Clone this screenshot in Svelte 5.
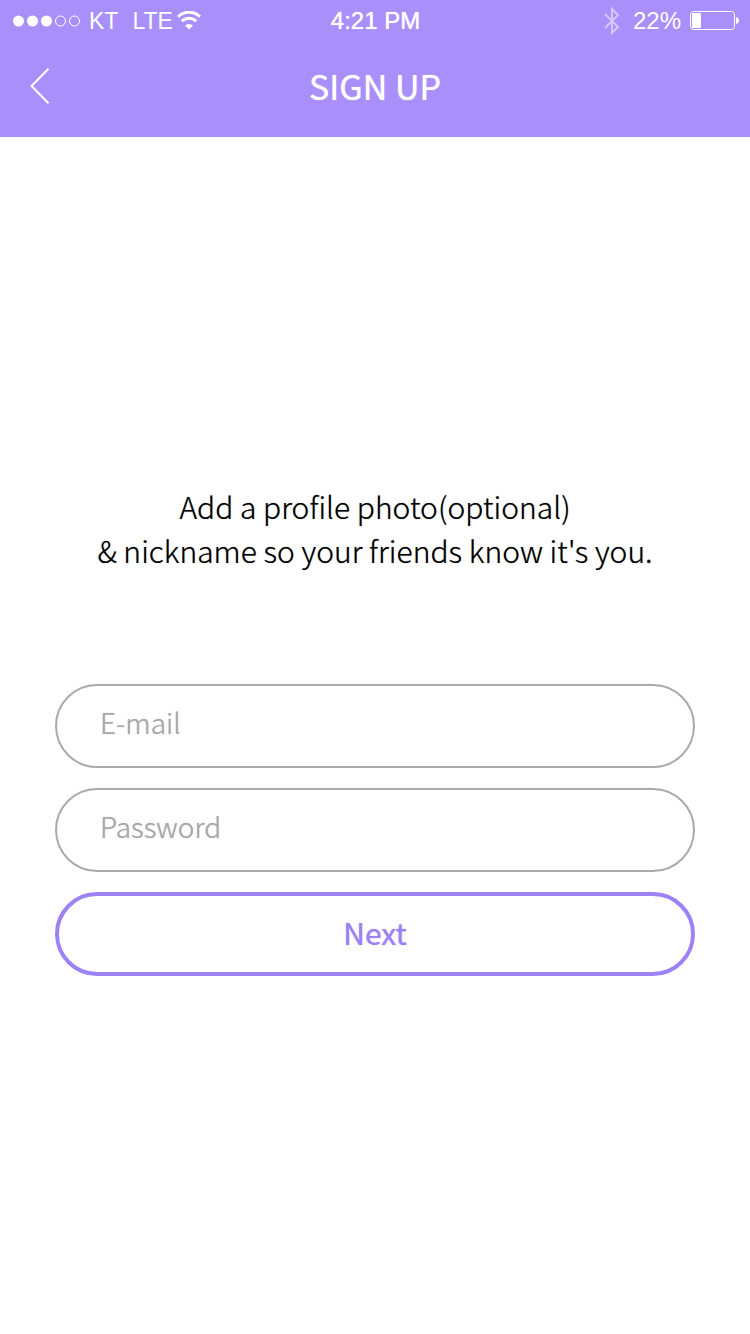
<script>
  let email = $state('');
  let password = $state('');
</script>

<header>
  <div class="status">
    <div class="left">
      <svg class="dots" width="68" height="12" viewBox="0 0 68 12" fill="#fff" aria-hidden="true">
        <circle cx="6.500" cy="6" r="5.500" /><circle cx="20.500" cy="6" r="5.500" /><circle cx="34.500" cy="6" r="5.500" />
        <circle cx="48.500" cy="6" r="5" fill="none" stroke="#fff" /><circle cx="62.500" cy="6" r="5" fill="none" stroke="#fff" />
      </svg>
      <span>KT</span>
      <span class="net">LTE</span>
      <svg class="wifi" width="24" height="20" viewBox="0 0 24 20" fill="none" stroke="#fff" stroke-width="3" aria-hidden="true">
        <path d="M1 5.800a15.500 15.500 0 0 1 22 0" /><path d="M4.800 10.300a10 10 0 0 1 14.400 0" />
        <path d="M12 18.500l-4-4a5.800 5.800 0 0 1 8 0z" fill="#fff" stroke="none" />
      </svg>
    </div>
    <time>4:21 PM</time>
    <div class="right">
      <svg class="bt" width="16" height="28" viewBox="0 0 16 28" fill="none" stroke="#fff" stroke-width="2" aria-hidden="true">
        <path d="M1 7l13 13-6 6V2l6 6L1 21" />
      </svg>
      <span class="charge">22%</span>
      <svg class="battery" width="49" height="20" viewBox="0 0 49 20" aria-hidden="true">
        <rect x=".5" y=".5" width="44" height="18" rx="3" fill="none" stroke="#fff" />
        <rect x="2" y="2" width="9" height="15" rx="1" fill="#fff" />
        <path d="M46 6q3 1 3 3.500t-3 3.500z" fill="#fff" />
      </svg>
    </div>
  </div>
  <nav>
    <button class="back" type="button" aria-label="Back">
      <svg width="20" height="36" viewBox="0 0 20 36" fill="none" stroke="#fff" stroke-width="2"><path d="M18.500 .7L1.500 18L18.500 35.300" /></svg>
    </button>
    <h1>SIGN UP</h1>
  </nav>
</header>

<main>
  <p>Add a profile photo(optional)<br />&amp; nickname so your friends know it's you.</p>
  <form onsubmit={(e) => e.preventDefault()}>
    <input type="email" placeholder="E-mail" aria-label="E-mail" bind:value={email} />
    <input type="password" placeholder="Password" aria-label="Password" bind:value={password} />
    <button class="next" type="submit">Next</button>
  </form>
</main>

<style>
  :global(body) {
    margin: 0;
    background: #fff;
    font-family: "Noto Sans CJK KR", "Noto Sans", sans-serif;
  }
  header { background: #a88ffa; color: #fff; }
  .status {
    display: grid;
    grid-template-columns: 1fr auto 1fr;
    align-items: center;
    height: 42px;
    padding: 0 11px 0 12px;
    font: 23px "Liberation Sans", Arial, sans-serif;
  }
  .left, .right { display: flex; align-items: center; }
  .right { justify-content: flex-end; }
  .dots { margin-right: 9px; }
  .net { margin-left: 14px; }
  .wifi { margin-left: 4px; }
  .bt { opacity: 0.5; margin-right: 13px; }
  .charge { font-size: 24px; }
  .battery { margin-left: 9px; }
  time { font-size: 24px; text-shadow: 0 0 1px #fff; }
  nav {
    display: grid;
    grid-template-columns: 60px 1fr 60px;
    align-items: center;
    height: 87px;
    padding: 0 10px 8px;
  }
  h1 { margin: 0; text-align: center; font-size: 34px; font-weight: 400; line-height: 52px; text-shadow: 0 0 1px #fff; }
  button { font: inherit; cursor: pointer; }
  .back { display: flex; justify-content: center; padding: 10px 0; border: 0; background: none; }
  main { padding: 347px 55px 40px; }
  p { margin: 0; text-align: center; font-size: 30px; font-weight: 300; line-height: 44px; color: #000; text-shadow: 0 0 1px rgb(0 0 0 / 60%); }
  form { display: grid; gap: 20px; margin-top: 112px; }
  input, .next { box-sizing: border-box; width: 100%; height: 84px; border-radius: 42px; background: #fff; }
  input {
    border: 2px solid #aaa;
    padding: 0 43px 9px;
    font: 300 28px "Noto Sans CJK KR", "Noto Sans", sans-serif;
    color: #333;
  }
  input::placeholder { color: #a8a8a8; opacity: 1; text-shadow: 0 0 1px #aaa; }
  .next { padding: 0 6px 4px; border: 4px solid #9d82f6; color: #9d82f6; font-size: 30px; font-weight: 400; text-shadow: 0 0 1px #9d82f6; }
</style>
